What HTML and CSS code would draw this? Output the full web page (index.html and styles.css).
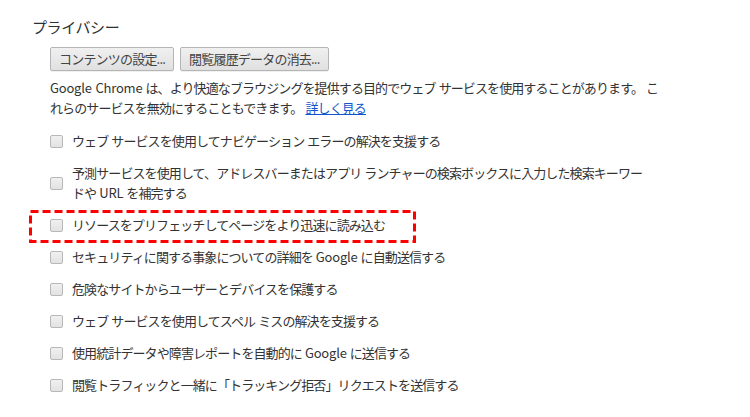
FILE: index.html
```html
<!DOCTYPE html>
<html lang="ja">
<head>
<meta charset="utf-8">
<title>プライバシー</title>
<link rel="stylesheet" href="styles.css">
</head>
<body>
<section class="privacy">
  <h2 class="title">プライバシー</h2>
  <div class="content">
    <div class="buttons">
      <button class="btn" type="button">コンテンツの設定...</button>
      <button class="btn" type="button">閲覧履歴データの消去...</button>
    </div>
    <p class="desc"><span class="en">Google Chrome</span> は、より快適なブラウジングを提供する目的でウェブ サービスを使用することがあります。 こ<br>れらのサービスを無効にすることもできます。 <a class="link" href="#">詳しく見る</a></p>
    <ul class="options">
      <li class="opt"><span class="box"></span><span class="label">ウェブ サービスを使用してナビゲーション エラーの解決を支援する</span></li>
      <li class="opt"><span class="box"></span><span class="label">予測サービスを使用して、アドレスバーまたはアプリ ランチャーの検索ボックスに入力した検索キーワー<br>ドや <span class="en">URL</span> を補完する</span></li>
      <li class="opt marked"><span class="box"></span><span class="label">リソースをプリフェッチしてページをより迅速に読み込む</span>
        <svg class="mark" width="387" height="33" viewBox="0 0 387 33"><rect x="1.5" y="1.5" width="384" height="30" fill="none" stroke="#f00" stroke-width="3" stroke-dasharray="8 4"/></svg>
      </li>
      <li class="opt"><span class="box"></span><span class="label">セキュリティに関する事象についての詳細を <span class="en">Google</span> に自動送信する</span></li>
      <li class="opt"><span class="box"></span><span class="label">危険なサイトからユーザーとデバイスを保護する</span></li>
      <li class="opt"><span class="box"></span><span class="label">ウェブ サービスを使用してスペル ミスの解決を支援する</span></li>
      <li class="opt"><span class="box"></span><span class="label">使用統計データや障害レポートを自動的に <span class="en">Google</span> に送信する</span></li>
      <li class="opt"><span class="box"></span><span class="label">閲覧トラフィックと一緒に「トラッキング拒否」リクエストを送信する</span></li>
    </ul>
  </div>
</section>
</body>
</html>
```
FILE: styles.css
```css
html, body {
  margin: 0;
  padding: 0;
  background: #fff;
}
body {
  font-family: "Noto Sans CJK JP", "Noto Sans", sans-serif;
  font-size: 13px;
  color: #333;
  letter-spacing: -0.9px;
  word-spacing: 1px;
}
.en {
  letter-spacing: -0.2px;
}
.privacy {
  padding: 17px 0 0 32px;
}
.title {
  margin: 0;
  font-size: 15px;
  font-weight: normal;
  line-height: 20px;
  color: #303030;
  letter-spacing: -0.4px;
}
.content {
  margin-left: 18px;
  width: 660px;
}
.buttons {
  display: flex;
  gap: 6px;
  margin-top: 10px;
}
.btn {
  height: 24px;
  padding: 0 8px;
  font-family: inherit;
  font-size: 13px;
  letter-spacing: -0.8px;
  color: #444;
  background: linear-gradient(#f0f0f0, #e0e0e0);
  border: 1px solid #b5b5b5;
  border-radius: 2px;
  box-shadow: 0 1px 0 rgba(0,0,0,0.06);
  line-height: 22px;
}
.desc {
  margin: 7px 0 0;
  line-height: 20px;
}
.link {
  color: #1155cc;
  text-decoration: underline;
}
.options {
  list-style: none;
  margin: 13px 0 0;
  padding: 0;
  display: flex;
  flex-direction: column;
  gap: 12px;
}
.opt {
  display: flex;
  align-items: center;
  gap: 9px;
  line-height: 20px;
  position: relative;
}
.box {
  flex: none;
  width: 11px;
  height: 11px;
  border: 1px solid #b8b8b8;
  border-radius: 2px;
  background: linear-gradient(#f0f0f0, #e2e2e2);
}
.label {
  flex: 1;
}
.mark {
  position: absolute;
  left: -21px;
  top: -5px;
  pointer-events: none;
}
```
